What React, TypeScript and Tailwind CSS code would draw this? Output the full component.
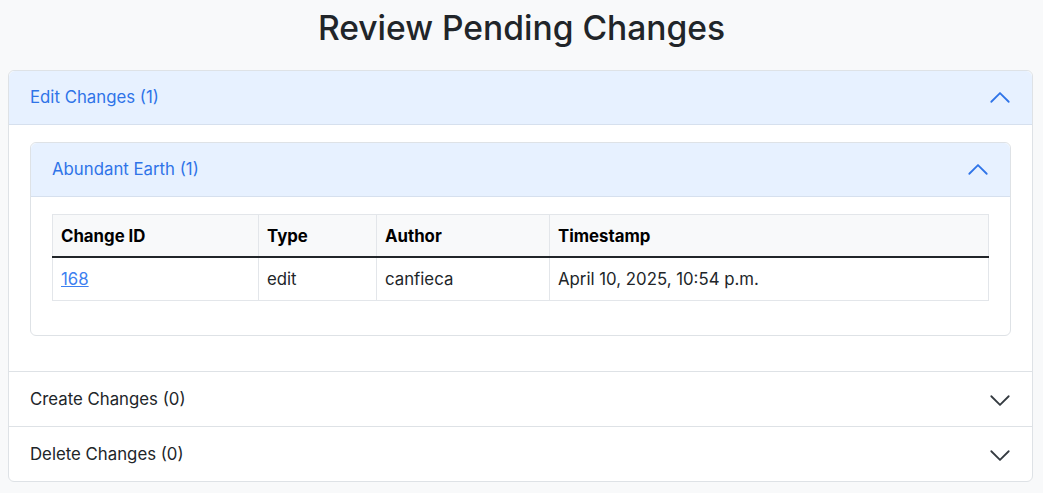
import React, { useState } from 'react';

type Change = { id: number; type: string; author: string; timestamp: string };

const edits: Change[] = [
  { id: 168, type: 'edit', author: 'canfieca', timestamp: 'April 10, 2025, 10:54 p.m.' },
];

const Chevron: React.FC<{ open: boolean }> = ({ open }) => (
  <svg
    className={open ? 'w-6 h-6 text-[#2f74e8] rotate-180' : 'w-6 h-6 text-[#343a40]'}
    viewBox="0 0 16 16"
    fill="none"
    stroke="currentColor"
    strokeWidth="1.2"
    strokeLinecap="round"
    strokeLinejoin="round"
  >
    <path d="M2.2 5.5L8 11.3L13.8 5.5" />
  </svg>
);

const Header: React.FC<{ label: string; open: boolean; onClick: () => void; rounded?: boolean }> = ({ label, open, onClick, rounded }) => (
  <button
    onClick={onClick}
    className={`w-full flex items-center justify-between pl-[21px] pr-[20px] pt-px h-[54px] text-left text-[16.8px] ${
      open ? 'bg-[#e7f1ff] text-[#2f74e8] border-b border-[#d6e0ee]' : 'text-[#212529]'
    } ${rounded ? 'rounded-t-[6px]' : ''}`}
  >
    <span>{label}</span>
    <Chevron open={open} />
  </button>
);

const ChangesTable: React.FC<{ rows: Change[] }> = ({ rows }) => (
  <table className="w-[936px] table-fixed border-collapse mb-4 text-[16.8px]">
    <colgroup>
      <col className="w-[206px]" />
      <col className="w-[118px]" />
      <col className="w-[173px]" />
      <col className="w-[439px]" />
    </colgroup>
    <thead>
      <tr className="bg-[#f8f9fa]">
        {['Change ID', 'Type', 'Author', 'Timestamp'].map((h) => (
          <th
            key={h}
            className="text-left font-bold text-black px-2 pt-[9px] pb-2 leading-6 border border-[#e3e6ea] border-b-2 border-b-[#212529]"
          >
            {h}
          </th>
        ))}
      </tr>
    </thead>
    <tbody>
      {rows.map((r) => (
        <tr key={r.id} className="text-[#212529]">
          <td className="px-2 py-[9px] leading-6 border border-[#e3e6ea]">
            <a href="#" className="text-[#3d80f0] underline">{r.id}</a>
          </td>
          <td className="px-2 py-[9px] leading-6 border border-[#e3e6ea]">{r.type}</td>
          <td className="px-2 py-[9px] leading-6 border border-[#e3e6ea]">{r.author}</td>
          <td className="px-2 py-[9px] leading-6 border border-[#e3e6ea]">{r.timestamp}</td>
        </tr>
      ))}
    </tbody>
  </table>
);

export default function App() {
  const [open, setOpen] = useState({ edit: true, earth: true, create: false, del: false });
  const toggle = (k: keyof typeof open) => setOpen((o) => ({ ...o, [k]: !o[k] }));

  return (
    <div className="min-h-screen bg-[#f8f9fa] font-['Inter',sans-serif] text-[#212529] pt-[9px]">
      <h1 className="text-center text-[33.6px] leading-[38px] font-medium text-[#212529] mb-[23px]">
        Review Pending Changes
      </h1>

      <div className="ml-2 mr-[10px] border border-[#dee2e6] rounded-[6px] bg-white">
        {/* Edit changes */}
        <div>
          <Header label="Edit Changes (1)" open={open.edit} onClick={() => toggle('edit')} rounded />
          {open.edit && (
            <div className="pt-[17px] pb-[19px] px-[21px]">
              <div className="border border-[#dee2e6] rounded-[6px] mb-4">
                <Header label="Abundant Earth (1)" open={open.earth} onClick={() => toggle('earth')} rounded />
                {open.earth && (
                  <div className="pt-[17px] pb-[18px] px-[21px]">
                    <ChangesTable rows={edits} />
                  </div>
                )}
              </div>
            </div>
          )}
        </div>

        {/* Create changes */}
        <div className="border-t border-[#dee2e6]">
          <Header label="Create Changes (0)" open={open.create} onClick={() => toggle('create')} />
        </div>

        {/* Delete changes */}
        <div className="border-t border-[#dee2e6]">
          <Header label="Delete Changes (0)" open={open.del} onClick={() => toggle('del')} />
        </div>
      </div>
    </div>
  );
}
